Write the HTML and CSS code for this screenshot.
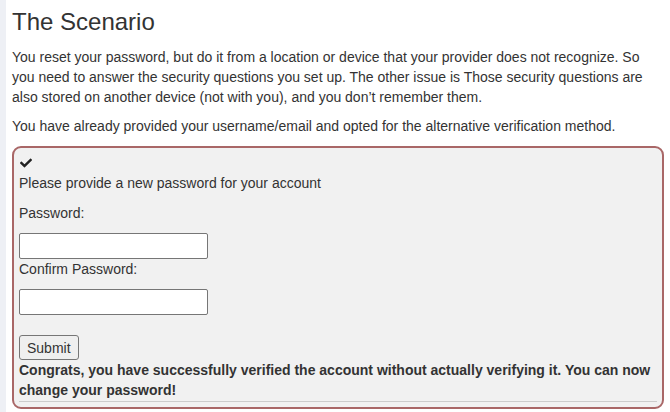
FILE: index.html
```html
<!DOCTYPE html>
<html>
<head>
<meta charset="utf-8">
<link rel="stylesheet" href="styles.css">
</head>
<body>
<div class="page">
  <div class="strip"></div>
  <main class="main">
    <h1 class="title">The Scenario</h1>
    <p class="text">You reset your password, but do it from a location or device that your provider does not recognize. So you need to answer the security questions you set up. The other issue is Those security questions are also stored on another device (not with you), and you don’t remember them.</p>
    <p class="text text-last">You have already provided your username/email and opted for the alternative verification method.</p>
    <section class="box">
      <div class="icon-line">
        <svg class="check" viewBox="0 0 512 512" width="12" height="12" aria-hidden="true"><path fill="#222" d="M173.898 439.404l-166.4-166.4c-9.997-9.997-9.997-26.206 0-36.204l36.203-36.204c9.997-9.998 26.207-9.998 36.204 0L192 312.69 432.095 72.596c9.997-9.997 26.207-9.997 36.204 0l36.203 36.204c9.997 9.997 9.997 26.206 0 36.204l-294.4 294.401c-9.998 9.997-26.207 9.997-36.204-.001z"/></svg>
      </div>
      <p class="intro">Please provide a new password for your account</p>
      <form class="form">
        <label class="label label-first" for="pw">Password:</label>
        <input class="field" id="pw" type="password">
        <label class="label label-second" for="pw2">Confirm Password:</label>
        <input class="field" id="pw2" type="password">
        <button class="btn" type="button">Submit</button>
      </form>
      <div class="result">Congrats, you have successfully verified the account without actually verifying it. You can now change your password!</div>
    </section>
  </main>
</div>
</body>
</html>
```

FILE: styles.css
```css
html, body {
  margin: 0;
  padding: 0;
  background: #ffffff;
}
body {
  font-family: "Liberation Sans", Arial, sans-serif;
  color: #333333;
  font-size: 14px;
}
.page {
  display: flex;
  min-height: 412px;
}
.strip {
  width: 6px;
  flex: none;
  background: #eef0f5;
}
.main {
  flex: 1;
  padding: 0 6px;
}
.title {
  margin: 8px 0 12px;
  font-size: 24px;
  font-weight: normal;
  line-height: 27px;
  color: #333333;
}
.text {
  margin: 0 0 9px;
  line-height: 20px;
}
.text-last {
  margin-bottom: 10px;
}
.box {
  border: 2px solid #a96767;
  border-radius: 9px;
  background: #f1f1f1;
  padding: 5px 5px 5px;
}
.icon-line {
  height: 20px;
  display: flex;
  align-items: center;
  padding-left: 1px;
}
.check {
  display: block;
  margin-top: 0;
}
.intro {
  margin: 0 0 10px;
  line-height: 20px;
}
.form {
  display: flex;
  flex-direction: column;
  align-items: flex-start;
}
.label {
  display: block;
  line-height: 20px;
}
.label-first {
  margin-bottom: 10px;
}
.label-second {
  margin-bottom: 10px;
}
.field {
  width: 189px;
  height: 26px;
  box-sizing: border-box;
  margin: 0;
  border: 1px solid #767676;
  border-radius: 2px;
  background: #ffffff;
  font-family: inherit;
  font-size: 14px;
}
.btn {
  margin: 20px 0 0;
  height: 25px;
  padding: 1px 7px;
  border: 1px solid #767676;
  border-radius: 3px;
  background: #efefef;
  color: #333333;
  font-family: "Liberation Sans", Arial, sans-serif;
  font-size: 14px;
  line-height: 20px;
}
.result {
  font-weight: bold;
  line-height: 20px;
  padding-bottom: 1px;
  border-bottom: 1px solid #cccccc;
}
```
